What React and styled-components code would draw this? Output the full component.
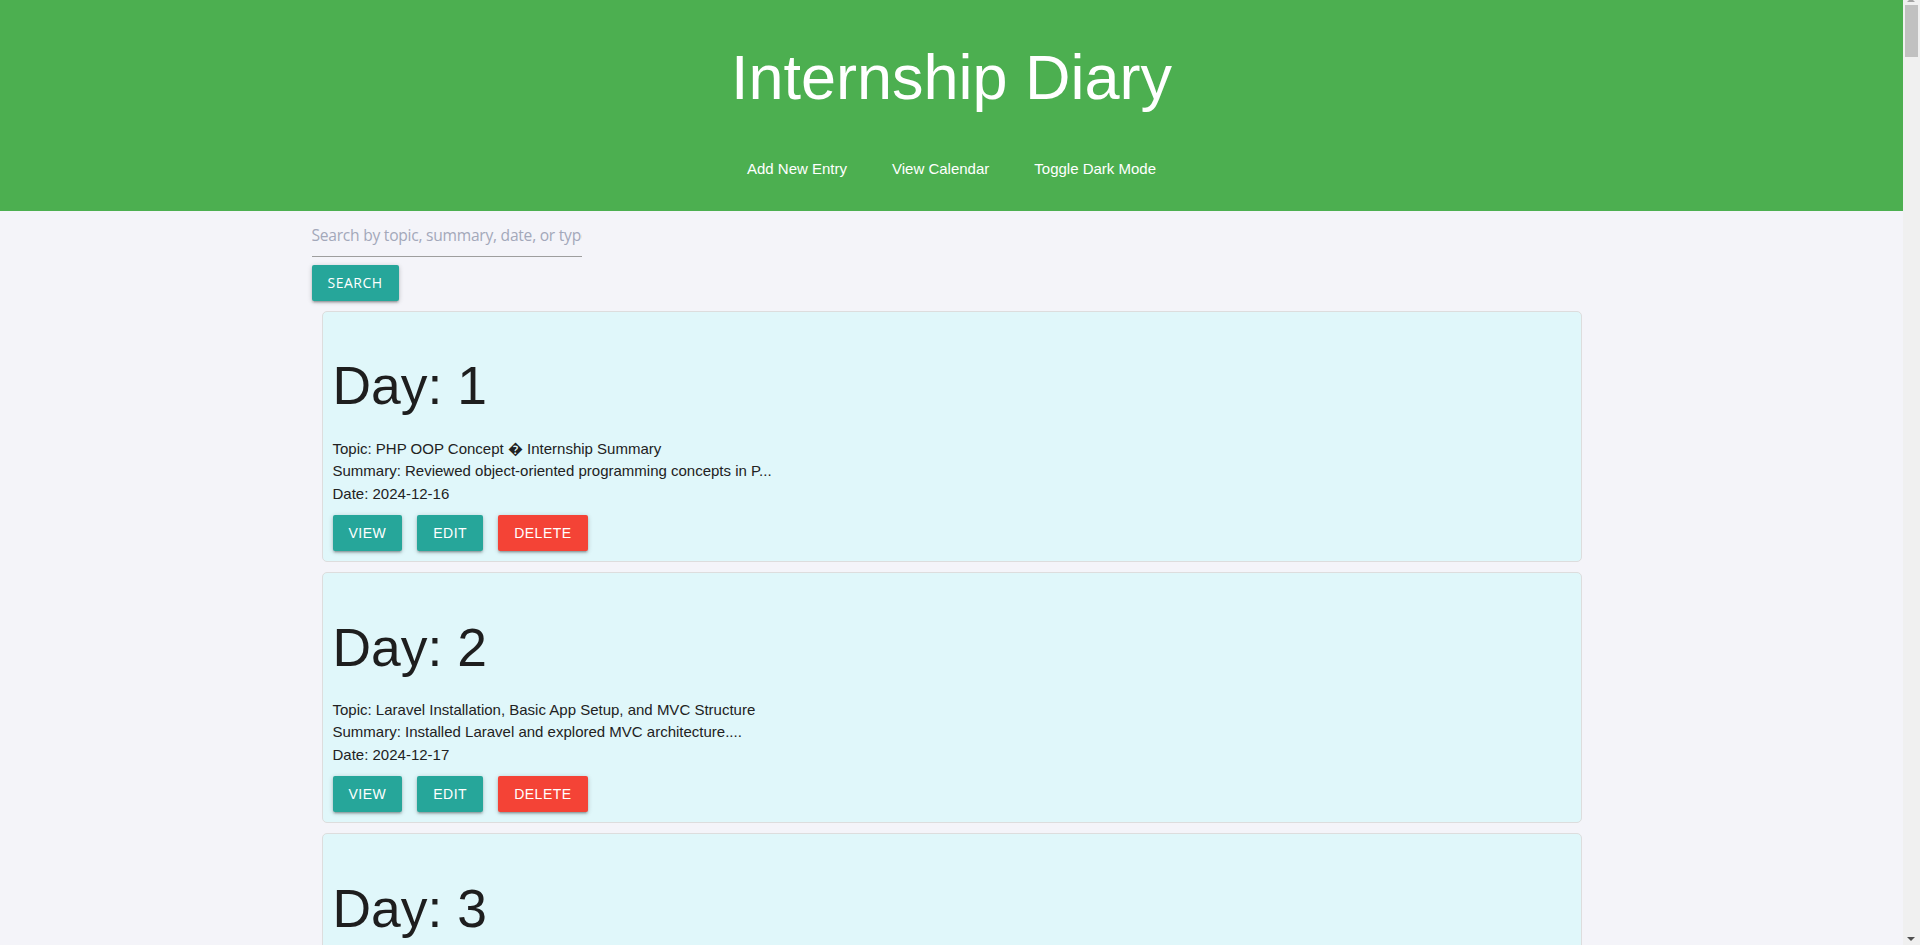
import React, { useState } from 'react';
import styled, { createGlobalStyle } from 'styled-components';

const GlobalStyle = createGlobalStyle`
  html {
    font-size: 15px;
  }
  body {
    margin: 0;
    padding-right: 17px;
    background-color: #f4f4f9;
    color: rgba(0, 0, 0, 0.87);
    font-family: 'Liberation Sans', Arial, sans-serif;
    line-height: 1.5;
  }
  * {
    box-sizing: border-box;
  }
`;

/* stand-in for the browser's scrollbar that the screenshot shows */
const ScrollTrack = styled.div`
  position: fixed;
  top: 0;
  right: 0;
  bottom: 0;
  width: 17px;
  background-color: #f0f0f0;
  z-index: 10;
`;

const ScrollThumb = styled.div`
  position: absolute;
  top: 5px;
  left: 2px;
  width: 13px;
  height: 52px;
  background-color: #c1c1c1;
`;

const ScrollArrow = styled.div`
  position: absolute;
  left: 4px;
  width: 0;
  height: 0;
  border-left: 4px solid transparent;
  border-right: 4px solid transparent;
  ${(props) =>
    props.down
      ? 'bottom: 4px; border-top: 4px solid #505050;'
      : 'top: -2px; border-bottom: 4px solid #a3a3a3;'}
`;

const HeaderBar = styled.header`
  background-color: #4caf50;
  color: #fff;
  text-align: center;
  padding: 43px 0 30px;
`;

const Title = styled.h1`
  margin: 0 0 25px;
  font-size: 63px;
  line-height: 110%;
  font-weight: 400;
`;

const Nav = styled.nav`
  display: flex;
  justify-content: center;
  gap: 45px;
  padding-top: 21px;
`;

const NavLink = styled.a`
  color: #fff;
  text-decoration: none;
  font-size: 15px;
  line-height: 22.5px;
  cursor: pointer;
`;

const Container = styled.main`
  max-width: 1280px;
  margin: 0 auto;
`;

const SearchForm = styled.form`
  display: flex;
  flex-direction: column;
  align-items: flex-start;
`;

const SearchInput = styled.input`
  width: 270px;
  height: 46px;
  margin: 0 0 8px;
  padding: 4px 0 0;
  border: none;
  border-bottom: 1px solid #9e9e9e;
  background: transparent;
  outline: none;
  font-family: 'Open Sans', 'Noto Sans', sans-serif;
  font-size: 15.6px;
  letter-spacing: -0.25px;
  color: #333;

  &::placeholder {
    color: #a3a8ba;
  }
`;

const Button = styled.button`
  height: 36px;
  padding: 0 16px;
  border: none;
  border-radius: 2px;
  background-color: ${(props) => (props.danger ? '#f44336' : '#26a69a')};
  color: #fff;
  font-family: ${(props) =>
    props.alt ? "'Open Sans', 'Noto Sans', sans-serif" : "'Liberation Sans', Arial, sans-serif"};
  font-size: 14px;
  line-height: 36px;
  letter-spacing: 0.5px;
  text-transform: uppercase;
  cursor: pointer;
  box-shadow: 0 2px 2px 0 rgba(0, 0, 0, 0.14), 0 3px 1px -2px rgba(0, 0, 0, 0.12),
    0 1px 5px 0 rgba(0, 0, 0, 0.2);
`;

const EntryList = styled.div`
  padding-top: 10px;
`;

const Card = styled.div`
  margin: 0 10px 10px;
  padding: 10px;
  background-color: #e0f7fa;
  border: 1px solid #ddd;
  border-radius: 5px;
`;

const DayHeading = styled.h2`
  margin: 35.6px 0 21.4px;
  font-size: 53.4px;
  line-height: 110%;
  font-weight: 400;
  color: #1e1e1e;
`;

const Line = styled.p`
  margin: 0;
  font-size: 15px;
  line-height: 22.5px;
  color: #222;
`;

const Actions = styled.div`
  display: flex;
  gap: 15px;
  margin-top: 10px;
`;

const entries = [
  {
    day: 1,
    topic: 'PHP OOP Concept \uFFFD Internship Summary',
    summary: 'Reviewed object-oriented programming concepts in P...',
    date: '2024-12-16',
  },
  {
    day: 2,
    topic: 'Laravel Installation, Basic App Setup, and MVC Structure',
    summary: 'Installed Laravel and explored MVC architecture....',
    date: '2024-12-17',
  },
  {
    day: 3,
    topic: 'Routing, Controllers and Blade Templates',
    summary: 'Created routes and controllers, rendered Blade vie...',
    date: '2024-12-18',
  },
  {
    day: 4,
    topic: 'Database Migrations and Eloquent ORM',
    summary: 'Set up MySQL connection and wrote first migrations...',
    date: '2024-12-19',
  },
];

const App = () => {
  const [query, setQuery] = useState('');

  return (
    <>
      <GlobalStyle />
      <HeaderBar>
        <Title>Internship Diary</Title>
        <Nav>
          <NavLink>Add New Entry</NavLink>
          <NavLink>View Calendar</NavLink>
          <NavLink>Toggle Dark Mode</NavLink>
        </Nav>
      </HeaderBar>
      <Container>
        <SearchForm onSubmit={(e) => e.preventDefault()}>
          <SearchInput
            type="text"
            value={query}
            onChange={(e) => setQuery(e.target.value)}
            placeholder="Search by topic, summary, date, or type"
          />
          <Button alt type="submit">
            Search
          </Button>
        </SearchForm>
        <EntryList>
          {entries.map((entry) => (
            <Card key={entry.day}>
              <DayHeading>Day: {entry.day}</DayHeading>
              <Line>Topic: {entry.topic}</Line>
              <Line>Summary: {entry.summary}</Line>
              <Line>Date: {entry.date}</Line>
              <Actions>
                <Button>View</Button>
                <Button>Edit</Button>
                <Button danger>Delete</Button>
              </Actions>
            </Card>
          ))}
        </EntryList>
      </Container>
      <ScrollTrack aria-hidden="true">
        <ScrollArrow />
        <ScrollThumb />
        <ScrollArrow down />
      </ScrollTrack>
    </>
  );
};

export default App;
